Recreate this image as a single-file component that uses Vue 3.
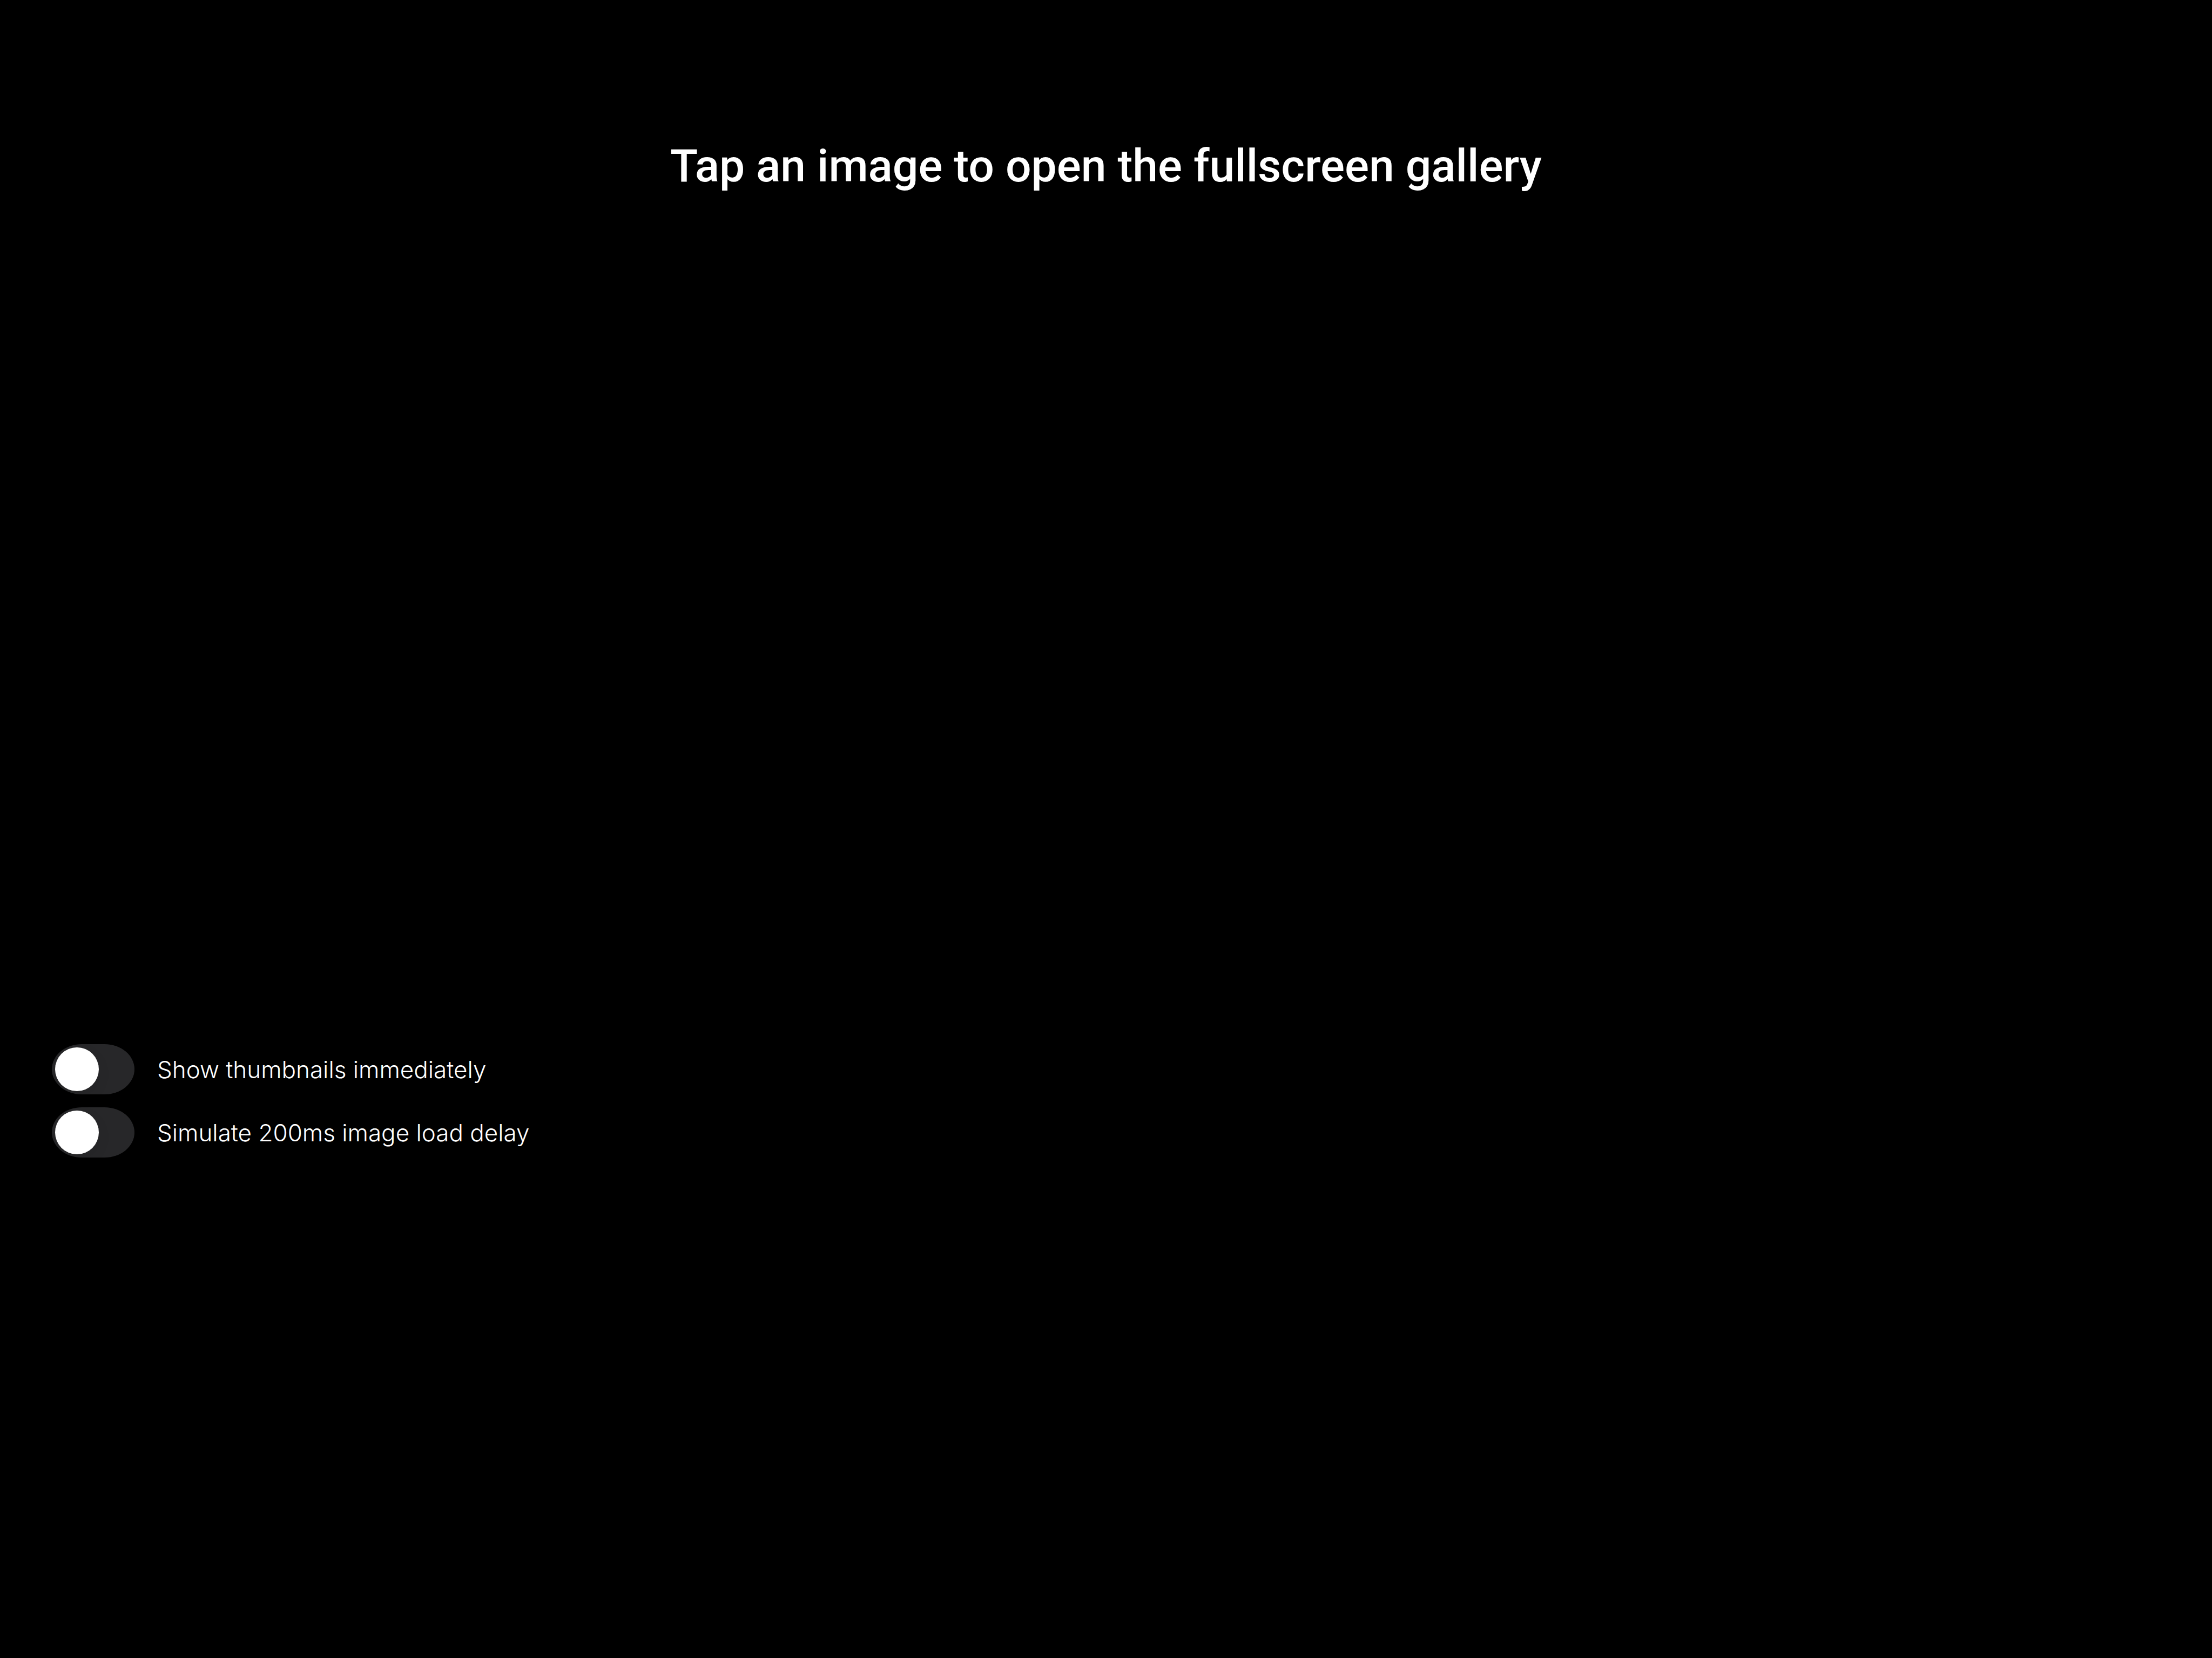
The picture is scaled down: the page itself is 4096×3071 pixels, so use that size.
<script setup>
import { reactive } from 'vue'

const options = reactive([
  { id: 'thumbnails', label: 'Show thumbnails immediately', on: false },
  { id: 'delay', label: 'Simulate 200ms image load delay', on: false },
])
</script>

<template>
  <main class="page">
    <h1 class="title">Tap an image to open the fullscreen gallery</h1>
    <section class="gallery" aria-label="Images"></section>
    <section class="options" aria-label="Options">
      <div v-for="option in options" :key="option.id" class="option">
        <input :id="option.id" v-model="option.on" class="switch" type="checkbox" role="switch" />
        <label class="option-label" :for="option.id">{{ option.label }}</label>
      </div>
    </section>
  </main>
</template>

<style>
body {
  background: #000;
}
</style>

<style scoped>
.page {
  display: flex;
  flex-direction: column;
  box-sizing: border-box;
  min-height: 100vh;
  padding: 256px 96px 96px;
  background: #000;
  color: #fff;
}

.title {
  margin: 0;
  font-family: Roboto, sans-serif;
  font-size: 84px;
  font-weight: 500;
  line-height: 104px;
  text-align: center;
}

/* Image area between the title and the switches */
.gallery {
  height: 1574px;
}

.options {
  display: flex;
  flex-direction: column;
  gap: 24px;
}

.option {
  display: flex;
  align-items: center;
  gap: 42px;
}

.switch {
  appearance: none;
  box-sizing: border-box;
  flex: none;
  width: 153px;
  height: 93px;
  margin: 0;
  padding: 6px;
  border-radius: 56px / 47px;
  background: #272729;
  overflow: hidden;
  cursor: pointer;
}

.switch::before {
  content: '';
  display: block;
  width: 81px;
  height: 81px;
  border-radius: 50%;
  background: #fff;
  box-shadow: 0 9px 24px rgba(0, 0, 0, 0.08);
}

.switch:checked {
  background: #34c759;
}

.switch:checked::before {
  margin-left: auto;
}

.option-label {
  font-family: Inter, sans-serif;
  font-size: 44px;
  font-weight: 300;
  line-height: 60px;
}
</style>
